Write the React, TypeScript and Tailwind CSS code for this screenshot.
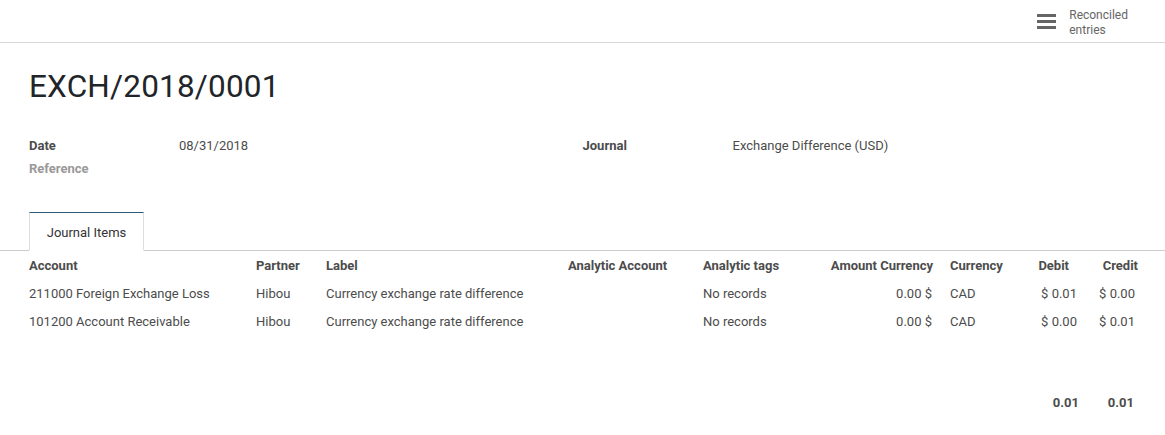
import React from "react";

const rows = [
  { account: "211000 Foreign Exchange Loss", partner: "Hibou", label: "Currency exchange rate difference", tags: "No records", amount: "0.00 $", currency: "CAD", debit: "$ 0.01", credit: "$ 0.00" },
  { account: "101200 Account Receivable", partner: "Hibou", label: "Currency exchange rate difference", tags: "No records", amount: "0.00 $", currency: "CAD", debit: "$ 0.00", credit: "$ 0.01" },
];

// column widths measured from the screenshot (table starts at x=29)
const cols = "grid grid-cols-[227px_70px_242px_135px_106px_131px_75px_60px_64px]";

export default function App() {
  return (
    <div className="w-[1165px] h-[435px] bg-white text-[#4c4c4c] overflow-hidden" style={{ fontFamily: "Roboto, 'Liberation Sans', sans-serif" }}>
      {/* button box */}
      <div className="h-[43px] border-b border-[#d9d9d9] flex justify-end">
        <button className="flex items-start pt-[8px] pr-[37px] gap-[13px] text-[12px] leading-[15px] text-[#666] text-left">
          <span className="flex flex-col gap-[3px] mt-[6px] w-[19px]">
            <span className="h-[3px] bg-[#666]" />
            <span className="h-[3px] bg-[#666]" />
            <span className="h-[3px] bg-[#666]" />
          </span>
          <span>Reconciled<br />entries</span>
        </button>
      </div>

      <div className="px-[29px]">
        <h1 className="text-[31.5px] leading-[40px] text-[#212529] mt-[24px] tracking-[0.2px]">EXCH/2018/0001</h1>

        <div className="grid grid-cols-2 mt-[27px] text-[13px] leading-[23px]">
          <div>
            <div className="flex">
              <span className="w-[150px] font-bold">Date</span>
              <span>08/31/2018</span>
            </div>
            <div className="flex">
              <span className="w-[150px] font-bold text-[#999]">Reference</span>
            </div>
          </div>
          <div>
            <div className="flex">
              <span className="w-[150px] font-bold">Journal</span>
              <span>Exchange Difference (USD)</span>
            </div>
          </div>
        </div>
      </div>

      {/* notebook */}
      <div className="mt-[32px] border-b border-[#ccc] px-[29px] flex">
        <div className="w-[115px] h-[39px] pt-[2px] -mb-px bg-white border border-[#ddd] border-b-white border-t-[#2d5a7b] text-[13px] text-[#333] flex items-center justify-center">
          Journal Items
        </div>
      </div>

      <div className="px-[29px] text-[13px]">
        <div className={`${cols} h-[29px] items-center font-bold pt-[1px]`}>
          <span>Account</span>
          <span>Partner</span>
          <span>Label</span>
          <span>Analytic Account</span>
          <span>Analytic tags</span>
          <span className="text-right pr-[7px]">Amount Currency</span>
          <span className="pl-[10px]">Currency</span>
          <span className="text-right pr-[6px]">Debit</span>
          <span className="text-right pr-[1px]">Credit</span>
        </div>
        {rows.map((r) => (
          <div key={r.account} className={`${cols} h-[28px] items-center`}>
            <span>{r.account}</span>
            <span>{r.partner}</span>
            <span>{r.label}</span>
            <span />
            <span>{r.tags}</span>
            <span className="text-right pr-[8px]">{r.amount}</span>
            <span className="pl-[10px]">{r.currency}</span>
            <span className="text-right -mr-[2px]">{r.debit}</span>
            <span className="text-right pr-[4px]">{r.credit}</span>
          </div>
        ))}
        <div className={`${cols} h-[28px] items-center font-bold mt-[53px]`}>
          <span />
          <span />
          <span />
          <span />
          <span />
          <span />
          <span />
          <span className="text-right -mr-[4px]">0.01</span>
          <span className="text-right pr-[5px]">0.01</span>
        </div>
      </div>
    </div>
  );
}
